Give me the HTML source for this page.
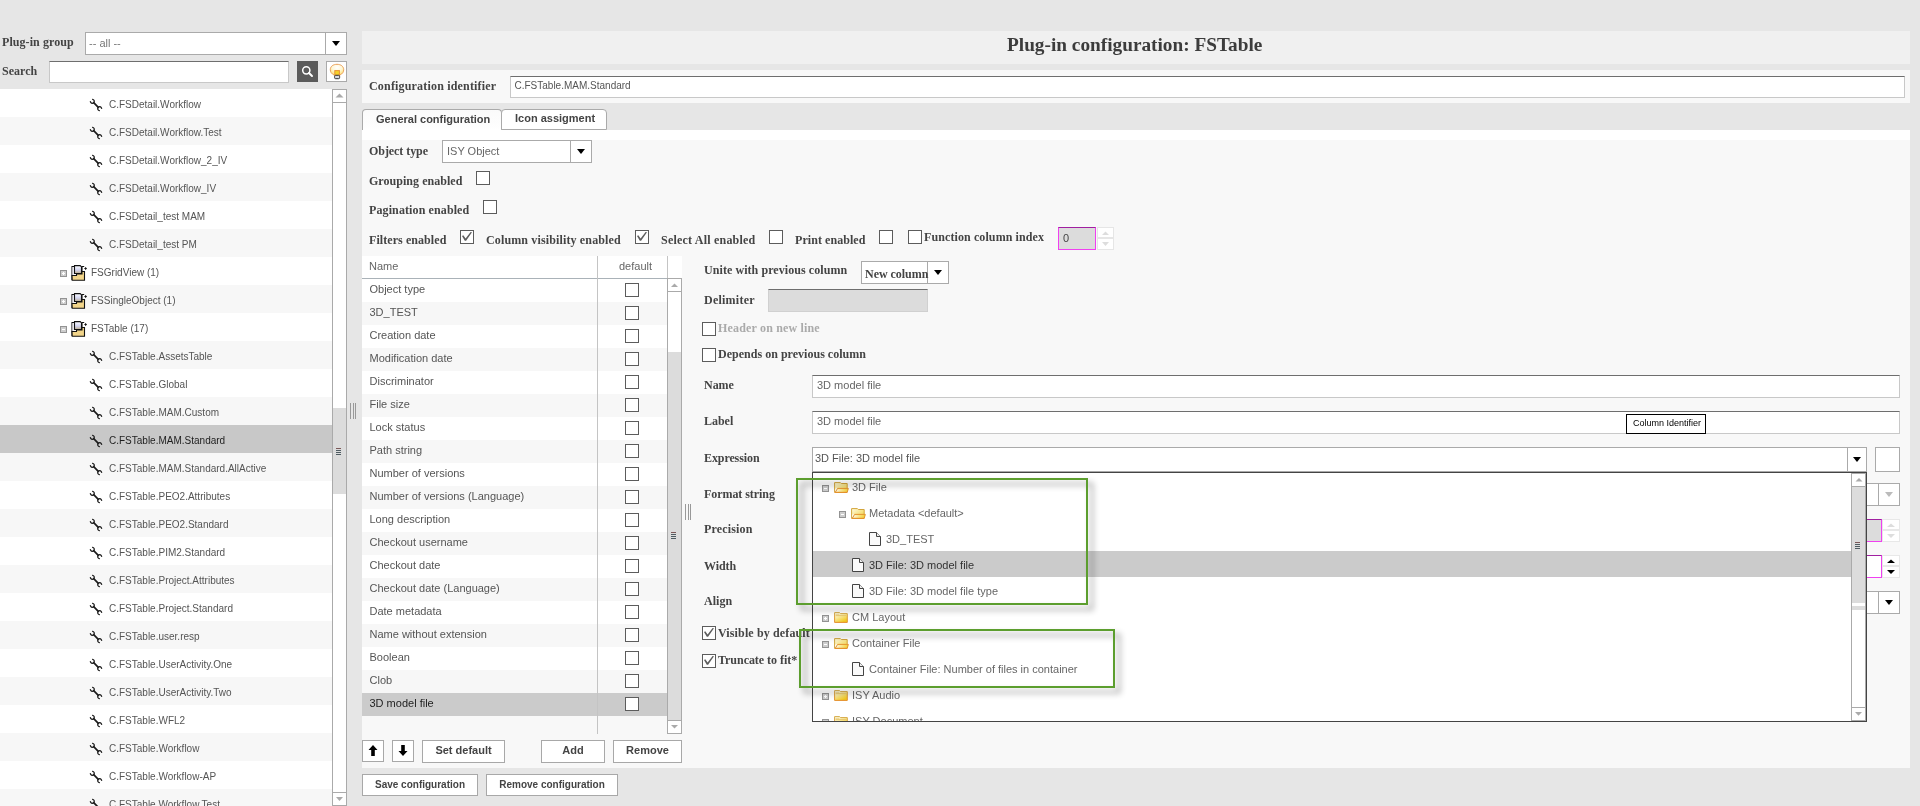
<!DOCTYPE html><html><head><meta charset="utf-8"><style>
*{box-sizing:border-box;margin:0;padding:0}
html,body{width:1920px;height:806px;overflow:hidden;background:#e6e6e6;font-family:"Liberation Sans",sans-serif;color:#555;position:relative;-webkit-font-smoothing:antialiased}
.a{position:absolute}
.lbl{position:absolute;font-family:"Liberation Serif",serif;font-weight:bold;font-size:12px;color:#444;white-space:nowrap;line-height:1}
.txt{position:absolute;font-size:11px;color:#666;white-space:nowrap;line-height:1}
.box{position:absolute;background:#fff;border:1px solid #b4b4b4}
.inp{position:absolute;background:#fff;border:1px solid #c8c8c8;border-top-color:#6e6e6e}
.cb{position:absolute;width:14px;height:14px;border:1px solid #5c5c5c;background:#fff}
.tri{position:absolute;width:0;height:0;border-left:4px solid transparent;border-right:4px solid transparent;border-top:5px solid #000}
.btn{position:absolute;background:#fff;border:1px solid #a8a8a8;font-weight:bold;font-size:11px;color:#444;text-align:center;white-space:nowrap;line-height:1}
.row{position:absolute;left:0;width:332px;height:28px}
.row.s{background:#f7f7f7}
.row.sel{background:#c8c8c8}
.tt{position:absolute;font-size:10px;color:#555;white-space:nowrap;line-height:1}
.tr{position:absolute;left:362px;width:305px;height:23px;background:#fff}
.tr.s{background:#f7f7f7}
.tr.sel{background:#cbcbcb}
.tr span{position:absolute;left:7.5px;top:4.5px;font-size:11px;color:#555;white-space:nowrap;line-height:1}
.tr .cb{left:263px;top:4px}
.dr{position:absolute;left:813px;width:1038px;height:26px}
.dr.sel{background:#cbcbcb}
.dr span{position:absolute;top:8px;font-size:11px;color:#666;white-space:nowrap;line-height:1}
svg{position:absolute;overflow:visible}
</style></head><body><div id="root" style="position:absolute;left:0;top:0;width:1920px;height:806px;overflow:hidden;background:#e6e6e6;will-change:transform">
<div class="lbl" style="left:2px;top:35.5px;letter-spacing:0.07px">Plug-in group</div>
<div class="box" style="left:85px;top:32px;width:262px;height:23px;border-color:#aaa"></div>
<div class="txt" style="left:89px;top:38px;color:#777">-- all --</div>
<div class="a" style="left:325px;top:33px;width:1px;height:21px;background:#aaa"></div>
<div class="tri" style="left:332px;top:41px"></div>
<div class="lbl" style="left:2px;top:64.5px;letter-spacing:0.03px">Search</div>
<div class="inp" style="left:49px;top:61px;width:240px;height:22px"></div>
<div class="a" style="left:297px;top:61px;width:21px;height:21px;background:#5b5b5b"></div>
<svg class="a" style="left:297px;top:61px" width="21" height="21" viewBox="0 0 21 21"><circle cx="9.3" cy="9.3" r="3.6" fill="none" stroke="#fff" stroke-width="1.5"/><path d="M12 12 L15 15" stroke="#fff" stroke-width="2" stroke-linecap="round"/></svg>
<div class="box" style="left:326px;top:61px;width:21px;height:21px;border-color:#aaa"></div>
<svg class="a" style="left:326px;top:61px" width="21" height="21" viewBox="0 0 21 21">
<defs><radialGradient id="bg1" cx="0.5" cy="0.3" r="0.7"><stop offset="0" stop-color="#ffffff"/><stop offset="0.5" stop-color="#fff8d8"/><stop offset="1" stop-color="#ffe070"/></radialGradient></defs>
<path d="M8.3 14.2 C5.2 12.6 4.3 10.8 4.3 8.6 C4.3 5.3 7.3 3.3 11 3.3 C14.7 3.3 17.7 5.3 17.7 8.6 C17.7 10.8 16.8 12.6 13.7 14.2 Z" fill="url(#bg1)" stroke="#eba05a" stroke-width="1"/>
<rect x="8.8" y="9.6" width="4.6" height="4.6" fill="#f6d22a" stroke="#ea9436" stroke-width="1"/>
<rect x="8.6" y="14.3" width="5" height="3.4" rx="1" fill="#d8d8e0" stroke="#333" stroke-width="1"/>
</svg>
<div class="a" style="left:0;top:89px;width:333px;height:717px;background:#fff;overflow:hidden">
<div class="row" style="top:0px"></div>
<svg class="a" style="left:90px;top:10px" width="12" height="12" viewBox="0 0 12 12"><path d="M3.7 3.7 L8.3 8.3" stroke="#1c1c1c" stroke-width="1.7" stroke-linecap="round"/><path d="M2.13 0.4 A1.95 1.95 0 1 1 0.4 2.13" fill="none" stroke="#1c1c1c" stroke-width="1.25"/><path d="M9.87 11.6 A1.95 1.95 0 1 1 11.6 9.87" fill="none" stroke="#1c1c1c" stroke-width="1.25"/></svg>
<div class="tt" style="left:109px;top:11px;color:#555">C.FSDetail.Workflow</div>
<div class="row s" style="top:28px"></div>
<svg class="a" style="left:90px;top:38px" width="12" height="12" viewBox="0 0 12 12"><path d="M3.7 3.7 L8.3 8.3" stroke="#1c1c1c" stroke-width="1.7" stroke-linecap="round"/><path d="M2.13 0.4 A1.95 1.95 0 1 1 0.4 2.13" fill="none" stroke="#1c1c1c" stroke-width="1.25"/><path d="M9.87 11.6 A1.95 1.95 0 1 1 11.6 9.87" fill="none" stroke="#1c1c1c" stroke-width="1.25"/></svg>
<div class="tt" style="left:109px;top:39px;color:#555">C.FSDetail.Workflow.Test</div>
<div class="row" style="top:56px"></div>
<svg class="a" style="left:90px;top:66px" width="12" height="12" viewBox="0 0 12 12"><path d="M3.7 3.7 L8.3 8.3" stroke="#1c1c1c" stroke-width="1.7" stroke-linecap="round"/><path d="M2.13 0.4 A1.95 1.95 0 1 1 0.4 2.13" fill="none" stroke="#1c1c1c" stroke-width="1.25"/><path d="M9.87 11.6 A1.95 1.95 0 1 1 11.6 9.87" fill="none" stroke="#1c1c1c" stroke-width="1.25"/></svg>
<div class="tt" style="left:109px;top:67px;color:#555">C.FSDetail.Workflow_2_IV</div>
<div class="row s" style="top:84px"></div>
<svg class="a" style="left:90px;top:94px" width="12" height="12" viewBox="0 0 12 12"><path d="M3.7 3.7 L8.3 8.3" stroke="#1c1c1c" stroke-width="1.7" stroke-linecap="round"/><path d="M2.13 0.4 A1.95 1.95 0 1 1 0.4 2.13" fill="none" stroke="#1c1c1c" stroke-width="1.25"/><path d="M9.87 11.6 A1.95 1.95 0 1 1 11.6 9.87" fill="none" stroke="#1c1c1c" stroke-width="1.25"/></svg>
<div class="tt" style="left:109px;top:95px;color:#555">C.FSDetail.Workflow_IV</div>
<div class="row" style="top:112px"></div>
<svg class="a" style="left:90px;top:122px" width="12" height="12" viewBox="0 0 12 12"><path d="M3.7 3.7 L8.3 8.3" stroke="#1c1c1c" stroke-width="1.7" stroke-linecap="round"/><path d="M2.13 0.4 A1.95 1.95 0 1 1 0.4 2.13" fill="none" stroke="#1c1c1c" stroke-width="1.25"/><path d="M9.87 11.6 A1.95 1.95 0 1 1 11.6 9.87" fill="none" stroke="#1c1c1c" stroke-width="1.25"/></svg>
<div class="tt" style="left:109px;top:123px;color:#555">C.FSDetail_test MAM</div>
<div class="row s" style="top:140px"></div>
<svg class="a" style="left:90px;top:150px" width="12" height="12" viewBox="0 0 12 12"><path d="M3.7 3.7 L8.3 8.3" stroke="#1c1c1c" stroke-width="1.7" stroke-linecap="round"/><path d="M2.13 0.4 A1.95 1.95 0 1 1 0.4 2.13" fill="none" stroke="#1c1c1c" stroke-width="1.25"/><path d="M9.87 11.6 A1.95 1.95 0 1 1 11.6 9.87" fill="none" stroke="#1c1c1c" stroke-width="1.25"/></svg>
<div class="tt" style="left:109px;top:151px;color:#555">C.FSDetail_test PM</div>
<div class="row" style="top:168px"></div>
<div class="a" style="left:60px;top:181px;width:7px;height:7px;background:#cdcdcd;border:1px solid #939393"></div><div class="a" style="left:62px;top:184px;width:3px;height:1px;background:#fff"></div><div class="a" style="left:63px;top:183px;width:1px;height:3px;background:#fff"></div>
<svg class="a" style="left:71px;top:176px" width="16" height="16" viewBox="0 0 16 16">
<defs><linearGradient id="pg" x1="0" y1="0" x2="0" y2="1"><stop offset="0" stop-color="#ffffff"/><stop offset="0.55" stop-color="#d2d5f2"/><stop offset="1" stop-color="#bfae8c"/></linearGradient></defs>
<path d="M1 15 V1.5 H3.5" fill="none" stroke="#111" stroke-width="1.1"/>
<rect x="1.5" y="2" width="2" height="8" fill="#f4f2f8"/>
<path d="M3.5 0.6 H9.2 L10.5 1.9 V8.5 H3.5 Z" fill="url(#pg)" stroke="#111" stroke-width="1.1"/>
<path d="M10.5 1.5 H13.2 M11 1.8 V6.5 H13.5" fill="none" stroke="#111" stroke-width="1.1"/>
<path d="M14.6 2.3 V4.7 M13.4 3.5 H15.8" stroke="#111" stroke-width="1.1"/>
<path d="M1 10.5 H5.5 V9 H11 V6.5 H13.5 V15.3 H1.2 Z" fill="#f2d58a" stroke="#111" stroke-width="1.1"/>
</svg>
<div class="tt" style="left:91px;top:179px">FSGridView (1)</div>
<div class="row s" style="top:196px"></div>
<div class="a" style="left:60px;top:209px;width:7px;height:7px;background:#cdcdcd;border:1px solid #939393"></div><div class="a" style="left:62px;top:212px;width:3px;height:1px;background:#fff"></div><div class="a" style="left:63px;top:211px;width:1px;height:3px;background:#fff"></div>
<svg class="a" style="left:71px;top:204px" width="16" height="16" viewBox="0 0 16 16">
<defs><linearGradient id="pg" x1="0" y1="0" x2="0" y2="1"><stop offset="0" stop-color="#ffffff"/><stop offset="0.55" stop-color="#d2d5f2"/><stop offset="1" stop-color="#bfae8c"/></linearGradient></defs>
<path d="M1 15 V1.5 H3.5" fill="none" stroke="#111" stroke-width="1.1"/>
<rect x="1.5" y="2" width="2" height="8" fill="#f4f2f8"/>
<path d="M3.5 0.6 H9.2 L10.5 1.9 V8.5 H3.5 Z" fill="url(#pg)" stroke="#111" stroke-width="1.1"/>
<path d="M10.5 1.5 H13.2 M11 1.8 V6.5 H13.5" fill="none" stroke="#111" stroke-width="1.1"/>
<path d="M14.6 2.3 V4.7 M13.4 3.5 H15.8" stroke="#111" stroke-width="1.1"/>
<path d="M1 10.5 H5.5 V9 H11 V6.5 H13.5 V15.3 H1.2 Z" fill="#f2d58a" stroke="#111" stroke-width="1.1"/>
</svg>
<div class="tt" style="left:91px;top:207px">FSSingleObject (1)</div>
<div class="row" style="top:224px"></div>
<div class="a" style="left:60px;top:237px;width:7px;height:7px;background:#cdcdcd;border:1px solid #939393"></div><div class="a" style="left:62px;top:240px;width:3px;height:1px;background:#fff"></div>
<svg class="a" style="left:71px;top:232px" width="16" height="16" viewBox="0 0 16 16">
<defs><linearGradient id="pg" x1="0" y1="0" x2="0" y2="1"><stop offset="0" stop-color="#ffffff"/><stop offset="0.55" stop-color="#d2d5f2"/><stop offset="1" stop-color="#bfae8c"/></linearGradient></defs>
<path d="M1 15 V1.5 H3.5" fill="none" stroke="#111" stroke-width="1.1"/>
<rect x="1.5" y="2" width="2" height="8" fill="#f4f2f8"/>
<path d="M3.5 0.6 H9.2 L10.5 1.9 V8.5 H3.5 Z" fill="url(#pg)" stroke="#111" stroke-width="1.1"/>
<path d="M10.5 1.5 H13.2 M11 1.8 V6.5 H13.5" fill="none" stroke="#111" stroke-width="1.1"/>
<path d="M14.6 2.3 V4.7 M13.4 3.5 H15.8" stroke="#111" stroke-width="1.1"/>
<path d="M1 10.5 H5.5 V9 H11 V6.5 H13.5 V15.3 H1.2 Z" fill="#f2d58a" stroke="#111" stroke-width="1.1"/>
</svg>
<div class="tt" style="left:91px;top:235px">FSTable (17)</div>
<div class="row s" style="top:252px"></div>
<svg class="a" style="left:90px;top:262px" width="12" height="12" viewBox="0 0 12 12"><path d="M3.7 3.7 L8.3 8.3" stroke="#1c1c1c" stroke-width="1.7" stroke-linecap="round"/><path d="M2.13 0.4 A1.95 1.95 0 1 1 0.4 2.13" fill="none" stroke="#1c1c1c" stroke-width="1.25"/><path d="M9.87 11.6 A1.95 1.95 0 1 1 11.6 9.87" fill="none" stroke="#1c1c1c" stroke-width="1.25"/></svg>
<div class="tt" style="left:109px;top:263px;color:#555">C.FSTable.AssetsTable</div>
<div class="row" style="top:280px"></div>
<svg class="a" style="left:90px;top:290px" width="12" height="12" viewBox="0 0 12 12"><path d="M3.7 3.7 L8.3 8.3" stroke="#1c1c1c" stroke-width="1.7" stroke-linecap="round"/><path d="M2.13 0.4 A1.95 1.95 0 1 1 0.4 2.13" fill="none" stroke="#1c1c1c" stroke-width="1.25"/><path d="M9.87 11.6 A1.95 1.95 0 1 1 11.6 9.87" fill="none" stroke="#1c1c1c" stroke-width="1.25"/></svg>
<div class="tt" style="left:109px;top:291px;color:#555">C.FSTable.Global</div>
<div class="row s" style="top:308px"></div>
<svg class="a" style="left:90px;top:318px" width="12" height="12" viewBox="0 0 12 12"><path d="M3.7 3.7 L8.3 8.3" stroke="#1c1c1c" stroke-width="1.7" stroke-linecap="round"/><path d="M2.13 0.4 A1.95 1.95 0 1 1 0.4 2.13" fill="none" stroke="#1c1c1c" stroke-width="1.25"/><path d="M9.87 11.6 A1.95 1.95 0 1 1 11.6 9.87" fill="none" stroke="#1c1c1c" stroke-width="1.25"/></svg>
<div class="tt" style="left:109px;top:319px;color:#555">C.FSTable.MAM.Custom</div>
<div class="row sel" style="top:336px"></div>
<svg class="a" style="left:90px;top:346px" width="12" height="12" viewBox="0 0 12 12"><path d="M3.7 3.7 L8.3 8.3" stroke="#1c1c1c" stroke-width="1.7" stroke-linecap="round"/><path d="M2.13 0.4 A1.95 1.95 0 1 1 0.4 2.13" fill="none" stroke="#1c1c1c" stroke-width="1.25"/><path d="M9.87 11.6 A1.95 1.95 0 1 1 11.6 9.87" fill="none" stroke="#1c1c1c" stroke-width="1.25"/></svg>
<div class="tt" style="left:109px;top:347px;color:#1e1e1e">C.FSTable.MAM.Standard</div>
<div class="row s" style="top:364px"></div>
<svg class="a" style="left:90px;top:374px" width="12" height="12" viewBox="0 0 12 12"><path d="M3.7 3.7 L8.3 8.3" stroke="#1c1c1c" stroke-width="1.7" stroke-linecap="round"/><path d="M2.13 0.4 A1.95 1.95 0 1 1 0.4 2.13" fill="none" stroke="#1c1c1c" stroke-width="1.25"/><path d="M9.87 11.6 A1.95 1.95 0 1 1 11.6 9.87" fill="none" stroke="#1c1c1c" stroke-width="1.25"/></svg>
<div class="tt" style="left:109px;top:375px;color:#555">C.FSTable.MAM.Standard.AllActive</div>
<div class="row" style="top:392px"></div>
<svg class="a" style="left:90px;top:402px" width="12" height="12" viewBox="0 0 12 12"><path d="M3.7 3.7 L8.3 8.3" stroke="#1c1c1c" stroke-width="1.7" stroke-linecap="round"/><path d="M2.13 0.4 A1.95 1.95 0 1 1 0.4 2.13" fill="none" stroke="#1c1c1c" stroke-width="1.25"/><path d="M9.87 11.6 A1.95 1.95 0 1 1 11.6 9.87" fill="none" stroke="#1c1c1c" stroke-width="1.25"/></svg>
<div class="tt" style="left:109px;top:403px;color:#555">C.FSTable.PEO2.Attributes</div>
<div class="row s" style="top:420px"></div>
<svg class="a" style="left:90px;top:430px" width="12" height="12" viewBox="0 0 12 12"><path d="M3.7 3.7 L8.3 8.3" stroke="#1c1c1c" stroke-width="1.7" stroke-linecap="round"/><path d="M2.13 0.4 A1.95 1.95 0 1 1 0.4 2.13" fill="none" stroke="#1c1c1c" stroke-width="1.25"/><path d="M9.87 11.6 A1.95 1.95 0 1 1 11.6 9.87" fill="none" stroke="#1c1c1c" stroke-width="1.25"/></svg>
<div class="tt" style="left:109px;top:431px;color:#555">C.FSTable.PEO2.Standard</div>
<div class="row" style="top:448px"></div>
<svg class="a" style="left:90px;top:458px" width="12" height="12" viewBox="0 0 12 12"><path d="M3.7 3.7 L8.3 8.3" stroke="#1c1c1c" stroke-width="1.7" stroke-linecap="round"/><path d="M2.13 0.4 A1.95 1.95 0 1 1 0.4 2.13" fill="none" stroke="#1c1c1c" stroke-width="1.25"/><path d="M9.87 11.6 A1.95 1.95 0 1 1 11.6 9.87" fill="none" stroke="#1c1c1c" stroke-width="1.25"/></svg>
<div class="tt" style="left:109px;top:459px;color:#555">C.FSTable.PIM2.Standard</div>
<div class="row s" style="top:476px"></div>
<svg class="a" style="left:90px;top:486px" width="12" height="12" viewBox="0 0 12 12"><path d="M3.7 3.7 L8.3 8.3" stroke="#1c1c1c" stroke-width="1.7" stroke-linecap="round"/><path d="M2.13 0.4 A1.95 1.95 0 1 1 0.4 2.13" fill="none" stroke="#1c1c1c" stroke-width="1.25"/><path d="M9.87 11.6 A1.95 1.95 0 1 1 11.6 9.87" fill="none" stroke="#1c1c1c" stroke-width="1.25"/></svg>
<div class="tt" style="left:109px;top:487px;color:#555">C.FSTable.Project.Attributes</div>
<div class="row" style="top:504px"></div>
<svg class="a" style="left:90px;top:514px" width="12" height="12" viewBox="0 0 12 12"><path d="M3.7 3.7 L8.3 8.3" stroke="#1c1c1c" stroke-width="1.7" stroke-linecap="round"/><path d="M2.13 0.4 A1.95 1.95 0 1 1 0.4 2.13" fill="none" stroke="#1c1c1c" stroke-width="1.25"/><path d="M9.87 11.6 A1.95 1.95 0 1 1 11.6 9.87" fill="none" stroke="#1c1c1c" stroke-width="1.25"/></svg>
<div class="tt" style="left:109px;top:515px;color:#555">C.FSTable.Project.Standard</div>
<div class="row s" style="top:532px"></div>
<svg class="a" style="left:90px;top:542px" width="12" height="12" viewBox="0 0 12 12"><path d="M3.7 3.7 L8.3 8.3" stroke="#1c1c1c" stroke-width="1.7" stroke-linecap="round"/><path d="M2.13 0.4 A1.95 1.95 0 1 1 0.4 2.13" fill="none" stroke="#1c1c1c" stroke-width="1.25"/><path d="M9.87 11.6 A1.95 1.95 0 1 1 11.6 9.87" fill="none" stroke="#1c1c1c" stroke-width="1.25"/></svg>
<div class="tt" style="left:109px;top:543px;color:#555">C.FSTable.user.resp</div>
<div class="row" style="top:560px"></div>
<svg class="a" style="left:90px;top:570px" width="12" height="12" viewBox="0 0 12 12"><path d="M3.7 3.7 L8.3 8.3" stroke="#1c1c1c" stroke-width="1.7" stroke-linecap="round"/><path d="M2.13 0.4 A1.95 1.95 0 1 1 0.4 2.13" fill="none" stroke="#1c1c1c" stroke-width="1.25"/><path d="M9.87 11.6 A1.95 1.95 0 1 1 11.6 9.87" fill="none" stroke="#1c1c1c" stroke-width="1.25"/></svg>
<div class="tt" style="left:109px;top:571px;color:#555">C.FSTable.UserActivity.One</div>
<div class="row s" style="top:588px"></div>
<svg class="a" style="left:90px;top:598px" width="12" height="12" viewBox="0 0 12 12"><path d="M3.7 3.7 L8.3 8.3" stroke="#1c1c1c" stroke-width="1.7" stroke-linecap="round"/><path d="M2.13 0.4 A1.95 1.95 0 1 1 0.4 2.13" fill="none" stroke="#1c1c1c" stroke-width="1.25"/><path d="M9.87 11.6 A1.95 1.95 0 1 1 11.6 9.87" fill="none" stroke="#1c1c1c" stroke-width="1.25"/></svg>
<div class="tt" style="left:109px;top:599px;color:#555">C.FSTable.UserActivity.Two</div>
<div class="row" style="top:616px"></div>
<svg class="a" style="left:90px;top:626px" width="12" height="12" viewBox="0 0 12 12"><path d="M3.7 3.7 L8.3 8.3" stroke="#1c1c1c" stroke-width="1.7" stroke-linecap="round"/><path d="M2.13 0.4 A1.95 1.95 0 1 1 0.4 2.13" fill="none" stroke="#1c1c1c" stroke-width="1.25"/><path d="M9.87 11.6 A1.95 1.95 0 1 1 11.6 9.87" fill="none" stroke="#1c1c1c" stroke-width="1.25"/></svg>
<div class="tt" style="left:109px;top:627px;color:#555">C.FSTable.WFL2</div>
<div class="row s" style="top:644px"></div>
<svg class="a" style="left:90px;top:654px" width="12" height="12" viewBox="0 0 12 12"><path d="M3.7 3.7 L8.3 8.3" stroke="#1c1c1c" stroke-width="1.7" stroke-linecap="round"/><path d="M2.13 0.4 A1.95 1.95 0 1 1 0.4 2.13" fill="none" stroke="#1c1c1c" stroke-width="1.25"/><path d="M9.87 11.6 A1.95 1.95 0 1 1 11.6 9.87" fill="none" stroke="#1c1c1c" stroke-width="1.25"/></svg>
<div class="tt" style="left:109px;top:655px;color:#555">C.FSTable.Workflow</div>
<div class="row" style="top:672px"></div>
<svg class="a" style="left:90px;top:682px" width="12" height="12" viewBox="0 0 12 12"><path d="M3.7 3.7 L8.3 8.3" stroke="#1c1c1c" stroke-width="1.7" stroke-linecap="round"/><path d="M2.13 0.4 A1.95 1.95 0 1 1 0.4 2.13" fill="none" stroke="#1c1c1c" stroke-width="1.25"/><path d="M9.87 11.6 A1.95 1.95 0 1 1 11.6 9.87" fill="none" stroke="#1c1c1c" stroke-width="1.25"/></svg>
<div class="tt" style="left:109px;top:683px;color:#555">C.FSTable.Workflow-AP</div>
<div class="row s" style="top:700px"></div>
<svg class="a" style="left:90px;top:710px" width="12" height="12" viewBox="0 0 12 12"><path d="M3.7 3.7 L8.3 8.3" stroke="#1c1c1c" stroke-width="1.7" stroke-linecap="round"/><path d="M2.13 0.4 A1.95 1.95 0 1 1 0.4 2.13" fill="none" stroke="#1c1c1c" stroke-width="1.25"/><path d="M9.87 11.6 A1.95 1.95 0 1 1 11.6 9.87" fill="none" stroke="#1c1c1c" stroke-width="1.25"/></svg>
<div class="tt" style="left:109px;top:711px;color:#555">C.FSTable.Workflow.Test</div>
</div>
<div class="a" style="left:332px;top:89px;width:15px;height:717px;background:#fff;border:1px solid #aaa;border-bottom:none"></div>
<div class="a" style="left:333px;top:102px;width:13px;height:1px;background:#aaa"></div>
<svg class="a" style="left:333px;top:89px" width="13" height="13"><path d="M2.5 8.5 L6.5 4.5 L10.5 8.5 Z" fill="#aaa"/></svg>
<div class="a" style="left:333px;top:408px;width:13px;height:86px;background:#dcdcdc"></div>
<div class="a" style="left:336px;top:448px;width:5px;height:1px;background:#7a5858"></div>
<div class="a" style="left:336px;top:450px;width:5px;height:1px;background:#4f5c62"></div>
<div class="a" style="left:336px;top:452px;width:5px;height:1px;background:#4f5c62"></div>
<div class="a" style="left:336px;top:454px;width:5px;height:1px;background:#4f5c62"></div>
<div class="a" style="left:333px;top:792px;width:13px;height:1px;background:#aaa"></div>
<div class="a" style="left:332px;top:805px;width:15px;height:1px;background:#aaa"></div>
<svg class="a" style="left:333px;top:793px" width="13" height="12"><path d="M3 4 L10 4 L6.5 8 Z" fill="#aaa"/></svg>
<div class="a" style="left:350.0px;top:403px;width:1px;height:16px;background:#999"></div>
<div class="a" style="left:352.5px;top:403px;width:1px;height:16px;background:#999"></div>
<div class="a" style="left:355.0px;top:403px;width:1px;height:16px;background:#999"></div>
<div class="a" style="left:362px;top:31px;width:1548px;height:33px;background:#f0f0f0"></div>
<div class="a" style="left:1007px;top:35px;font-family:'Liberation Serif',serif;font-weight:bold;font-size:19.3px;color:#3c3c3c;white-space:nowrap;line-height:1">Plug-in configuration: FSTable</div>
<div class="a" style="left:362px;top:70px;width:1548px;height:33px;background:#f8f8f8"></div>
<div class="lbl" style="left:369px;top:80px;letter-spacing:0.18px">Configuration identifier</div>
<div class="inp" style="left:510px;top:76px;width:1395px;height:22px"></div>
<div class="tt" style="left:514.5px;top:81px;color:#555">C.FSTable.MAM.Standard</div>
<div class="a" style="left:362px;top:130px;width:1548px;height:638px;background:#f8f8f8"></div>
<div class="a" style="left:362px;top:130px;width:1548px;height:10px;background:#fff"></div>
<div class="a" style="left:362px;top:109px;width:140px;height:21px;background:linear-gradient(#fafafa,#fdfdfd 70%,#fff);border:1px solid #aaa;border-bottom:none;border-radius:4px 4px 0 0"></div>
<div class="a" style="left:501px;top:109px;width:106px;height:21px;background:#fff;border:1px solid #aaa;border-radius:4px 4px 0 0"></div>
<div class="a" style="left:376px;top:114px;font-weight:bold;font-size:11px;color:#444;white-space:nowrap;line-height:1">General configuration</div>
<div class="a" style="left:515px;top:113px;font-weight:bold;font-size:11px;color:#444;white-space:nowrap;line-height:1">Icon assigment</div>
<div class="lbl" style="left:369px;top:145px;letter-spacing:-0.06px">Object type</div>
<div class="box" style="left:442px;top:140px;width:150px;height:23px;border-color:#aaa"></div><div class="a" style="left:570px;top:141px;width:1px;height:21px;background:#aaa"></div><div class="tri" style="left:577.0px;top:149.0px;border-top-color:#000"></div>
<div class="txt" style="left:447px;top:146px">ISY Object</div>
<div class="lbl" style="left:369px;top:175px;letter-spacing:0.04px">Grouping enabled</div>
<div class="cb" style="left:476px;top:171px"></div>
<div class="lbl" style="left:369px;top:204px;letter-spacing:0.11px">Pagination enabled</div>
<div class="cb" style="left:483px;top:200px"></div>
<div class="lbl" style="left:369px;top:234px;letter-spacing:0.07px">Filters enabled</div>
<div class="cb" style="left:460px;top:230px"></div><svg class="a" style="left:460px;top:230px" width="14" height="14" viewBox="0 0 14 14"><path d="M2.0 6.0 L3.3 5.3 L5.6 8.6 L10.6 1.9 L12.0 2.3 L6.1 10.8 L4.8 10.8 Z" fill="#5e5e5e"/></svg>
<div class="lbl" style="left:486px;top:234px;letter-spacing:0.14px">Column visibility enabled</div>
<div class="cb" style="left:635px;top:230px"></div><svg class="a" style="left:635px;top:230px" width="14" height="14" viewBox="0 0 14 14"><path d="M2.0 6.0 L3.3 5.3 L5.6 8.6 L10.6 1.9 L12.0 2.3 L6.1 10.8 L4.8 10.8 Z" fill="#5e5e5e"/></svg>
<div class="lbl" style="left:661px;top:234px;letter-spacing:0.21px">Select All enabled</div>
<div class="cb" style="left:769px;top:230px"></div>
<div class="lbl" style="left:795px;top:233.5px;letter-spacing:0.06px">Print enabled</div>
<div class="cb" style="left:879px;top:230px"></div>
<div class="cb" style="left:908px;top:230px"></div>
<div class="lbl" style="left:924px;top:230.5px;letter-spacing:0.1px">Function column index</div>
<div class="a" style="left:1058px;top:227px;width:38px;height:23px;background:#dcdcdc;border:1px solid #f040f0;border-top-color:#a020a0"></div>
<div class="txt" style="left:1063px;top:233px;color:#444">0</div>
<div class="a" style="left:1097px;top:227px;width:17px;height:11px;background:#fff;border:1px solid #e6e6e6"></div>
<div class="a" style="left:1097px;top:238px;width:17px;height:12px;background:#fff;border:1px solid #e6e6e6"></div>
<svg class="a" style="left:1097px;top:227px" width="17" height="23"><path d="M5 8 L12 8 L8.5 4.5 Z" fill="#ddd"/><path d="M5 15 L12 15 L8.5 19 Z" fill="#ddd"/></svg>
<div class="a" style="left:362px;top:256px;width:320px;height:22px;background:#fff"></div>
<div class="txt" style="left:369px;top:261px">Name</div>
<div class="txt" style="left:619px;top:261px">default</div>
<div class="a" style="left:362px;top:278px;width:305px;height:1px;background:#aab2b8"></div>
<div class="tr" style="top:279px"><span style="color:#555">Object type</span></div>
<div class="cb" style="left:625px;top:283px"></div>
<div class="tr s" style="top:302px"><span style="color:#555">3D_TEST</span></div>
<div class="cb" style="left:625px;top:306px"></div>
<div class="tr" style="top:325px"><span style="color:#555">Creation date</span></div>
<div class="cb" style="left:625px;top:329px"></div>
<div class="tr s" style="top:348px"><span style="color:#555">Modification date</span></div>
<div class="cb" style="left:625px;top:352px"></div>
<div class="tr" style="top:371px"><span style="color:#555">Discriminator</span></div>
<div class="cb" style="left:625px;top:375px"></div>
<div class="tr s" style="top:394px"><span style="color:#555">File size</span></div>
<div class="cb" style="left:625px;top:398px"></div>
<div class="tr" style="top:417px"><span style="color:#555">Lock status</span></div>
<div class="cb" style="left:625px;top:421px"></div>
<div class="tr s" style="top:440px"><span style="color:#555">Path string</span></div>
<div class="cb" style="left:625px;top:444px"></div>
<div class="tr" style="top:463px"><span style="color:#555">Number of versions</span></div>
<div class="cb" style="left:625px;top:467px"></div>
<div class="tr s" style="top:486px"><span style="color:#555">Number of versions (Language)</span></div>
<div class="cb" style="left:625px;top:490px"></div>
<div class="tr" style="top:509px"><span style="color:#555">Long description</span></div>
<div class="cb" style="left:625px;top:513px"></div>
<div class="tr s" style="top:532px"><span style="color:#555">Checkout username</span></div>
<div class="cb" style="left:625px;top:536px"></div>
<div class="tr" style="top:555px"><span style="color:#555">Checkout date</span></div>
<div class="cb" style="left:625px;top:559px"></div>
<div class="tr s" style="top:578px"><span style="color:#555">Checkout date (Language)</span></div>
<div class="cb" style="left:625px;top:582px"></div>
<div class="tr" style="top:601px"><span style="color:#555">Date metadata</span></div>
<div class="cb" style="left:625px;top:605px"></div>
<div class="tr s" style="top:624px"><span style="color:#555">Name without extension</span></div>
<div class="cb" style="left:625px;top:628px"></div>
<div class="tr" style="top:647px"><span style="color:#555">Boolean</span></div>
<div class="cb" style="left:625px;top:651px"></div>
<div class="tr s" style="top:670px"><span style="color:#555">Clob</span></div>
<div class="cb" style="left:625px;top:674px"></div>
<div class="tr sel" style="top:693px"><span style="color:#222">3D model file</span></div>
<div class="cb" style="left:625px;top:697px"></div>
<div class="a" style="left:597px;top:256px;width:1px;height:478px;background:#c4c4c4"></div>
<div class="a" style="left:667px;top:256px;width:1px;height:22px;background:#c4c4c4"></div>
<div class="a" style="left:667px;top:278px;width:15px;height:456px;background:#fff;border:1px solid #aaa"></div>
<div class="a" style="left:668px;top:352px;width:13px;height:368px;background:#dcdcdc"></div>
<div class="a" style="left:668px;top:291px;width:13px;height:1px;background:#aaa"></div>
<div class="a" style="left:668px;top:720px;width:13px;height:1px;background:#aaa"></div>
<svg class="a" style="left:668px;top:279px" width="13" height="12"><path d="M3 8 L10 8 L6.5 4.5 Z" fill="#aaa"/></svg>
<svg class="a" style="left:668px;top:721px" width="13" height="12"><path d="M3 4 L10 4 L6.5 7.5 Z" fill="#aaa"/></svg>
<div class="a" style="left:671px;top:532px;width:5px;height:1px;background:#7a5858"></div>
<div class="a" style="left:671px;top:534px;width:5px;height:1px;background:#4f5c62"></div>
<div class="a" style="left:671px;top:536px;width:5px;height:1px;background:#4f5c62"></div>
<div class="a" style="left:671px;top:538px;width:5px;height:1px;background:#4f5c62"></div>
<div class="a" style="left:685.0px;top:504px;width:1px;height:16px;background:#999"></div>
<div class="a" style="left:687.5px;top:504px;width:1px;height:16px;background:#999"></div>
<div class="a" style="left:690.0px;top:504px;width:1px;height:16px;background:#999"></div>
<div class="btn" style="left:362px;top:740px;width:22px;height:22px;font-size:11px;padding-top:4.5px"></div>
<div class="btn" style="left:392px;top:740px;width:22px;height:22px;font-size:11px;padding-top:4.5px"></div>
<svg class="a" style="left:362px;top:740px" width="22" height="22"><path d="M11 5 L15.5 10 H12.8 V16 H9.2 V10 H6.5 Z" fill="#000"/></svg>
<svg class="a" style="left:392px;top:740px" width="22" height="22"><path d="M11 16 L15.5 11 H12.8 V5 H9.2 V11 H6.5 Z" fill="#000"/></svg>
<div class="btn" style="left:422px;top:740px;width:83px;height:23px;font-size:11px;padding-top:4px">Set default</div>
<div class="btn" style="left:541px;top:740px;width:64px;height:23px;font-size:11px;padding-top:4px">Add</div>
<div class="btn" style="left:613px;top:740px;width:69px;height:23px;font-size:11px;padding-top:4px">Remove</div>
<div class="btn" style="left:362px;top:774px;width:116px;height:22px;font-size:10px;padding-top:5px">Save configuration</div>
<div class="btn" style="left:486px;top:774px;width:132px;height:22px;font-size:10px;padding-top:5px">Remove configuration</div>
<div class="lbl" style="left:704px;top:264px;letter-spacing:0.07px">Unite with previous column</div>
<div class="box" style="left:861px;top:261px;width:88px;height:23px;border-color:#aaa"></div><div class="a" style="left:927px;top:262px;width:1px;height:21px;background:#aaa"></div><div class="tri" style="left:934.0px;top:270.0px;border-top-color:#000"></div>
<div class="a" style="left:862px;top:262px;width:67px;height:21px;overflow:hidden"><div class="lbl" style="left:3px;top:6px;letter-spacing:-0.04px">New column</div></div>
<div class="lbl" style="left:704px;top:294px;letter-spacing:0.24px">Delimiter</div>
<div class="a" style="left:768px;top:289px;width:160px;height:23px;background:#dcdcdc;border:1px solid #d0d0d0;border-top-color:#6e6e6e"></div>
<div class="cb" style="left:702px;top:322px"></div>
<div class="lbl" style="left:718px;top:321.5px;color:#aaa;letter-spacing:0.17px">Header on new line</div>
<div class="cb" style="left:702px;top:348px"></div>
<div class="lbl" style="left:718px;top:348px;letter-spacing:0.02px">Depends on previous column</div>
<div class="lbl" style="left:704px;top:379px;letter-spacing:-0.03px">Name</div>
<div class="inp" style="left:812px;top:375px;width:1088px;height:23px"></div>
<div class="txt" style="left:817px;top:380px">3D model file</div>
<div class="lbl" style="left:704px;top:414.5px;letter-spacing:-0.02px">Label</div>
<div class="inp" style="left:812px;top:411px;width:1088px;height:23px"></div>
<div class="txt" style="left:817px;top:416px">3D model file</div>
<div class="lbl" style="left:704px;top:451.5px;letter-spacing:-0.1px">Expression</div>
<div class="box" style="left:812px;top:447px;width:1055px;height:25px;border-color:#aaa"></div><div class="a" style="left:1847px;top:448px;width:1px;height:23px;background:#aaa"></div><div class="tri" style="left:1853.0px;top:457.0px;border-top-color:#000"></div>
<div class="txt" style="left:815px;top:453px;color:#555">3D File: 3D model file</div>
<div class="box" style="left:1875px;top:447px;width:25px;height:25px;border-color:#aaa"></div>
<div class="lbl" style="left:704px;top:487.5px;letter-spacing:-0.06px">Format string</div>
<div class="box" style="left:1840px;top:483px;width:60px;height:23px;border-color:#aaa"></div><div class="a" style="left:1878px;top:484px;width:1px;height:21px;background:#aaa"></div><div class="tri" style="left:1885.0px;top:492.0px;border-top-color:#bbb"></div>
<div class="lbl" style="left:704px;top:523px;letter-spacing:0.17px">Precision</div>
<div class="a" style="left:1840px;top:519px;width:42px;height:23px;background:#dcdcdc;border:1px solid #f040f0;border-top-color:#a020a0"></div>
<div class="a" style="left:1882px;top:519px;width:18px;height:11px;background:#fff;border:1px solid #e8e8e8"></div>
<div class="a" style="left:1882px;top:530px;width:18px;height:12px;background:#fff;border:1px solid #e8e8e8"></div>
<svg class="a" style="left:1882px;top:519px" width="18" height="23"><path d="M5 8 L13 8 L9 4.5 Z" fill="#ddd"/><path d="M5 15 L13 15 L9 19 Z" fill="#ddd"/></svg>
<div class="lbl" style="left:704px;top:559.5px;letter-spacing:-0.08px">Width</div>
<div class="a" style="left:1840px;top:555px;width:42px;height:23px;background:#fff;border:1px solid #f040f0;border-top-color:#a020a0"></div>
<div class="a" style="left:1882px;top:555px;width:18px;height:11px;background:#fff;border:1px solid #e8e8e8"></div>
<div class="a" style="left:1882px;top:566px;width:18px;height:12px;background:#fff;border:1px solid #e8e8e8"></div>
<svg class="a" style="left:1882px;top:555px" width="18" height="23"><path d="M5 8 L13 8 L9 4.5 Z" fill="#000"/><path d="M5 15 L13 15 L9 19 Z" fill="#000"/></svg>
<div class="lbl" style="left:704px;top:595px;letter-spacing:0.06px">Align</div>
<div class="box" style="left:1840px;top:591px;width:60px;height:23px;border-color:#aaa"></div><div class="a" style="left:1878px;top:592px;width:1px;height:21px;background:#aaa"></div><div class="tri" style="left:1885.0px;top:600.0px;border-top-color:#000"></div>
<div class="cb" style="left:702px;top:626px"></div><svg class="a" style="left:702px;top:626px" width="14" height="14" viewBox="0 0 14 14"><path d="M2.0 6.0 L3.3 5.3 L5.6 8.6 L10.6 1.9 L12.0 2.3 L6.1 10.8 L4.8 10.8 Z" fill="#5e5e5e"/></svg>
<div class="lbl" style="left:718px;top:627px;letter-spacing:0.13px">Visible by default</div>
<div class="cb" style="left:702px;top:654px"></div><svg class="a" style="left:702px;top:654px" width="14" height="14" viewBox="0 0 14 14"><path d="M2.0 6.0 L3.3 5.3 L5.6 8.6 L10.6 1.9 L12.0 2.3 L6.1 10.8 L4.8 10.8 Z" fill="#5e5e5e"/></svg>
<div class="lbl" style="left:718px;top:654px;letter-spacing:-0.04px">Truncate to fit*</div>
<div class="a" style="left:1626px;top:414px;width:80px;height:20px;background:#fff;border:1px solid #000"></div>
<div class="a" style="left:1633px;top:419px;font-size:9px;color:#000;white-space:nowrap;line-height:1">Column Identifier</div>
<div class="a" style="left:812px;top:472px;width:1055px;height:250px;background:#fff;border:1px solid #444"></div>
<div class="a" style="left:813px;top:473px;width:1038px;height:248px;overflow:hidden">
<div class="a" style="left:9px;top:12px;width:7px;height:7px;background:#cdcdcd;border:1px solid #939393"></div><div class="a" style="left:11px;top:15px;width:3px;height:1px;background:#fff"></div>
<svg class="a" style="left:21px;top:9px" width="15" height="12" viewBox="0 0 15 12">
<defs><linearGradient id="fb" x1="0" y1="0" x2="1" y2="1"><stop offset="0" stop-color="#fffbe0"/><stop offset="1" stop-color="#f0cf3c"/></linearGradient>
<linearGradient id="ff" x1="0" y1="0" x2="1" y2="0"><stop offset="0" stop-color="#fffbe8"/><stop offset="1" stop-color="#f2cf2e"/></linearGradient></defs>
<path d="M0.6 10.4 V0.6 H6.4 L7.3 1.5 H13.2 V6.4 H0.6 Z" fill="url(#fb)"/>
<path d="M0.6 10.4 V0.6 H6.4 L7.3 1.5 H13.2 V6.4" fill="none" stroke="#d2a43a" stroke-width="1"/>
<path d="M1.2 10.4 L3.6 6.4 H14.3 L13.2 10.4 Z" fill="url(#ff)" stroke="#e3922c" stroke-width="1"/>
<path d="M0.6 10.4 H13.2" stroke="#e3902a" stroke-width="1"/>
</svg>
<div class="a" style="left:39px;top:9px;font-size:11px;color:#666;white-space:nowrap;line-height:1">3D File</div>
<div class="a" style="left:26px;top:38px;width:7px;height:7px;background:#cdcdcd;border:1px solid #939393"></div><div class="a" style="left:28px;top:41px;width:3px;height:1px;background:#fff"></div>
<svg class="a" style="left:38px;top:35px" width="15" height="12" viewBox="0 0 15 12">
<defs><linearGradient id="fb" x1="0" y1="0" x2="1" y2="1"><stop offset="0" stop-color="#fffbe0"/><stop offset="1" stop-color="#f0cf3c"/></linearGradient>
<linearGradient id="ff" x1="0" y1="0" x2="1" y2="0"><stop offset="0" stop-color="#fffbe8"/><stop offset="1" stop-color="#f2cf2e"/></linearGradient></defs>
<path d="M0.6 10.4 V0.6 H6.4 L7.3 1.5 H13.2 V6.4 H0.6 Z" fill="url(#fb)"/>
<path d="M0.6 10.4 V0.6 H6.4 L7.3 1.5 H13.2 V6.4" fill="none" stroke="#d2a43a" stroke-width="1"/>
<path d="M1.2 10.4 L3.6 6.4 H14.3 L13.2 10.4 Z" fill="url(#ff)" stroke="#e3922c" stroke-width="1"/>
<path d="M0.6 10.4 H13.2" stroke="#e3902a" stroke-width="1"/>
</svg>
<div class="a" style="left:56px;top:35px;font-size:11px;color:#666;white-space:nowrap;line-height:1">Metadata &lt;default&gt;</div>
<svg class="a" style="left:56px;top:59px" width="12" height="14" viewBox="0 0 12 14">
<path d="M0.5 0.5 H7.5 L11.5 4.5 V13.5 H0.5 Z" fill="#fafafa" stroke="#444" stroke-width="1"/>
<path d="M7.5 0.5 V4.5 H11.5" fill="#eee" stroke="#444" stroke-width="1"/>
</svg>
<div class="a" style="left:73px;top:61px;font-size:11px;color:#666;white-space:nowrap;line-height:1">3D_TEST</div>
<div class="a" style="left:0;top:78px;width:1038px;height:26px;background:#cbcbcb"></div>
<svg class="a" style="left:39px;top:85px" width="12" height="14" viewBox="0 0 12 14">
<path d="M0.5 0.5 H7.5 L11.5 4.5 V13.5 H0.5 Z" fill="#fafafa" stroke="#444" stroke-width="1"/>
<path d="M7.5 0.5 V4.5 H11.5" fill="#eee" stroke="#444" stroke-width="1"/>
</svg>
<div class="a" style="left:56px;top:87px;font-size:11px;color:#333;white-space:nowrap;line-height:1">3D File: 3D model file</div>
<svg class="a" style="left:39px;top:111px" width="12" height="14" viewBox="0 0 12 14">
<path d="M0.5 0.5 H7.5 L11.5 4.5 V13.5 H0.5 Z" fill="#fafafa" stroke="#444" stroke-width="1"/>
<path d="M7.5 0.5 V4.5 H11.5" fill="#eee" stroke="#444" stroke-width="1"/>
</svg>
<div class="a" style="left:56px;top:113px;font-size:11px;color:#666;white-space:nowrap;line-height:1">3D File: 3D model file type</div>
<div class="a" style="left:9px;top:142px;width:7px;height:7px;background:#cdcdcd;border:1px solid #939393"></div><div class="a" style="left:11px;top:145px;width:3px;height:1px;background:#fff"></div><div class="a" style="left:12px;top:144px;width:1px;height:3px;background:#fff"></div>
<svg class="a" style="left:21px;top:139px" width="15" height="12" viewBox="0 0 15 12">
<defs><linearGradient id="cf" x1="0" y1="0" x2="0.6" y2="1"><stop offset="0" stop-color="#fffdf0"/><stop offset="0.45" stop-color="#f9eaa0"/><stop offset="1" stop-color="#f1c81e"/></linearGradient>
<linearGradient id="cs" x1="0" y1="0" x2="0" y2="1"><stop offset="0" stop-color="#d4aa48"/><stop offset="1" stop-color="#e48e2c"/></linearGradient></defs>
<path d="M0.6 10.4 V0.6 H5.6 L6.5 1.6 H13.3 V10.4 Z" fill="url(#cf)" stroke="url(#cs)" stroke-width="1"/>
<path d="M1.6 3.6 H12.3" stroke="#e6c46a" stroke-width="0.9"/>
<path d="M1.6 2.4 H5.2" stroke="#e9cf8a" stroke-width="0.8"/>
</svg>
<div class="a" style="left:39px;top:139px;font-size:11px;color:#666;white-space:nowrap;line-height:1">CM Layout</div>
<div class="a" style="left:9px;top:168px;width:7px;height:7px;background:#cdcdcd;border:1px solid #939393"></div><div class="a" style="left:11px;top:171px;width:3px;height:1px;background:#fff"></div>
<svg class="a" style="left:21px;top:165px" width="15" height="12" viewBox="0 0 15 12">
<defs><linearGradient id="fb" x1="0" y1="0" x2="1" y2="1"><stop offset="0" stop-color="#fffbe0"/><stop offset="1" stop-color="#f0cf3c"/></linearGradient>
<linearGradient id="ff" x1="0" y1="0" x2="1" y2="0"><stop offset="0" stop-color="#fffbe8"/><stop offset="1" stop-color="#f2cf2e"/></linearGradient></defs>
<path d="M0.6 10.4 V0.6 H6.4 L7.3 1.5 H13.2 V6.4 H0.6 Z" fill="url(#fb)"/>
<path d="M0.6 10.4 V0.6 H6.4 L7.3 1.5 H13.2 V6.4" fill="none" stroke="#d2a43a" stroke-width="1"/>
<path d="M1.2 10.4 L3.6 6.4 H14.3 L13.2 10.4 Z" fill="url(#ff)" stroke="#e3922c" stroke-width="1"/>
<path d="M0.6 10.4 H13.2" stroke="#e3902a" stroke-width="1"/>
</svg>
<div class="a" style="left:39px;top:165px;font-size:11px;color:#666;white-space:nowrap;line-height:1">Container File</div>
<svg class="a" style="left:39px;top:189px" width="12" height="14" viewBox="0 0 12 14">
<path d="M0.5 0.5 H7.5 L11.5 4.5 V13.5 H0.5 Z" fill="#fafafa" stroke="#444" stroke-width="1"/>
<path d="M7.5 0.5 V4.5 H11.5" fill="#eee" stroke="#444" stroke-width="1"/>
</svg>
<div class="a" style="left:56px;top:191px;font-size:11px;color:#666;white-space:nowrap;line-height:1">Container File: Number of files in container</div>
<div class="a" style="left:9px;top:220px;width:7px;height:7px;background:#cdcdcd;border:1px solid #939393"></div><div class="a" style="left:11px;top:223px;width:3px;height:1px;background:#fff"></div><div class="a" style="left:12px;top:222px;width:1px;height:3px;background:#fff"></div>
<svg class="a" style="left:21px;top:217px" width="15" height="12" viewBox="0 0 15 12">
<defs><linearGradient id="cf" x1="0" y1="0" x2="0.6" y2="1"><stop offset="0" stop-color="#fffdf0"/><stop offset="0.45" stop-color="#f9eaa0"/><stop offset="1" stop-color="#f1c81e"/></linearGradient>
<linearGradient id="cs" x1="0" y1="0" x2="0" y2="1"><stop offset="0" stop-color="#d4aa48"/><stop offset="1" stop-color="#e48e2c"/></linearGradient></defs>
<path d="M0.6 10.4 V0.6 H5.6 L6.5 1.6 H13.3 V10.4 Z" fill="url(#cf)" stroke="url(#cs)" stroke-width="1"/>
<path d="M1.6 3.6 H12.3" stroke="#e6c46a" stroke-width="0.9"/>
<path d="M1.6 2.4 H5.2" stroke="#e9cf8a" stroke-width="0.8"/>
</svg>
<div class="a" style="left:39px;top:217px;font-size:11px;color:#666;white-space:nowrap;line-height:1">ISY Audio</div>
<div class="a" style="left:9px;top:246px;width:7px;height:7px;background:#cdcdcd;border:1px solid #939393"></div><div class="a" style="left:11px;top:249px;width:3px;height:1px;background:#fff"></div><div class="a" style="left:12px;top:248px;width:1px;height:3px;background:#fff"></div>
<svg class="a" style="left:21px;top:243px" width="15" height="12" viewBox="0 0 15 12">
<defs><linearGradient id="cf" x1="0" y1="0" x2="0.6" y2="1"><stop offset="0" stop-color="#fffdf0"/><stop offset="0.45" stop-color="#f9eaa0"/><stop offset="1" stop-color="#f1c81e"/></linearGradient>
<linearGradient id="cs" x1="0" y1="0" x2="0" y2="1"><stop offset="0" stop-color="#d4aa48"/><stop offset="1" stop-color="#e48e2c"/></linearGradient></defs>
<path d="M0.6 10.4 V0.6 H5.6 L6.5 1.6 H13.3 V10.4 Z" fill="url(#cf)" stroke="url(#cs)" stroke-width="1"/>
<path d="M1.6 3.6 H12.3" stroke="#e6c46a" stroke-width="0.9"/>
<path d="M1.6 2.4 H5.2" stroke="#e9cf8a" stroke-width="0.8"/>
</svg>
<div class="a" style="left:39px;top:243px;font-size:11px;color:#666;white-space:nowrap;line-height:1">ISY Document</div>
</div>
<div class="a" style="left:1851px;top:473px;width:15px;height:248px;background:#fff;border:1px solid #aaa"></div>
<div class="a" style="left:1852px;top:486px;width:13px;height:117px;background:#dcdcdc"></div>
<div class="a" style="left:1852px;top:606px;width:13px;height:4px;background:#dcdcdc"></div>
<div class="a" style="left:1852px;top:486px;width:13px;height:1px;background:#aaa"></div>
<div class="a" style="left:1852px;top:707px;width:13px;height:1px;background:#aaa"></div>
<svg class="a" style="left:1852px;top:473px" width="14" height="13"><path d="M3.5 8.5 L10.5 8.5 L7 5 Z" fill="#aaa"/></svg>
<svg class="a" style="left:1852px;top:708px" width="13" height="12"><path d="M3 4 L10 4 L6.5 7.8 Z" fill="#aaa"/></svg>
<div class="a" style="left:1855px;top:542px;width:5px;height:1px;background:#7a5858"></div>
<div class="a" style="left:1855px;top:544px;width:5px;height:1px;background:#4f5c62"></div>
<div class="a" style="left:1855px;top:546px;width:5px;height:1px;background:#4f5c62"></div>
<div class="a" style="left:1855px;top:548px;width:5px;height:1px;background:#4f5c62"></div>
<div class="a" style="left:796px;top:478px;width:292px;height:127px;border:2px solid #5c9e2e;filter:drop-shadow(5px 5px 3px rgba(0,0,0,0.45))"></div>
<div class="a" style="left:799px;top:629px;width:316px;height:59px;border:2px solid #5c9e2e;filter:drop-shadow(5px 5px 3px rgba(0,0,0,0.45))"></div>
</div></body></html>
